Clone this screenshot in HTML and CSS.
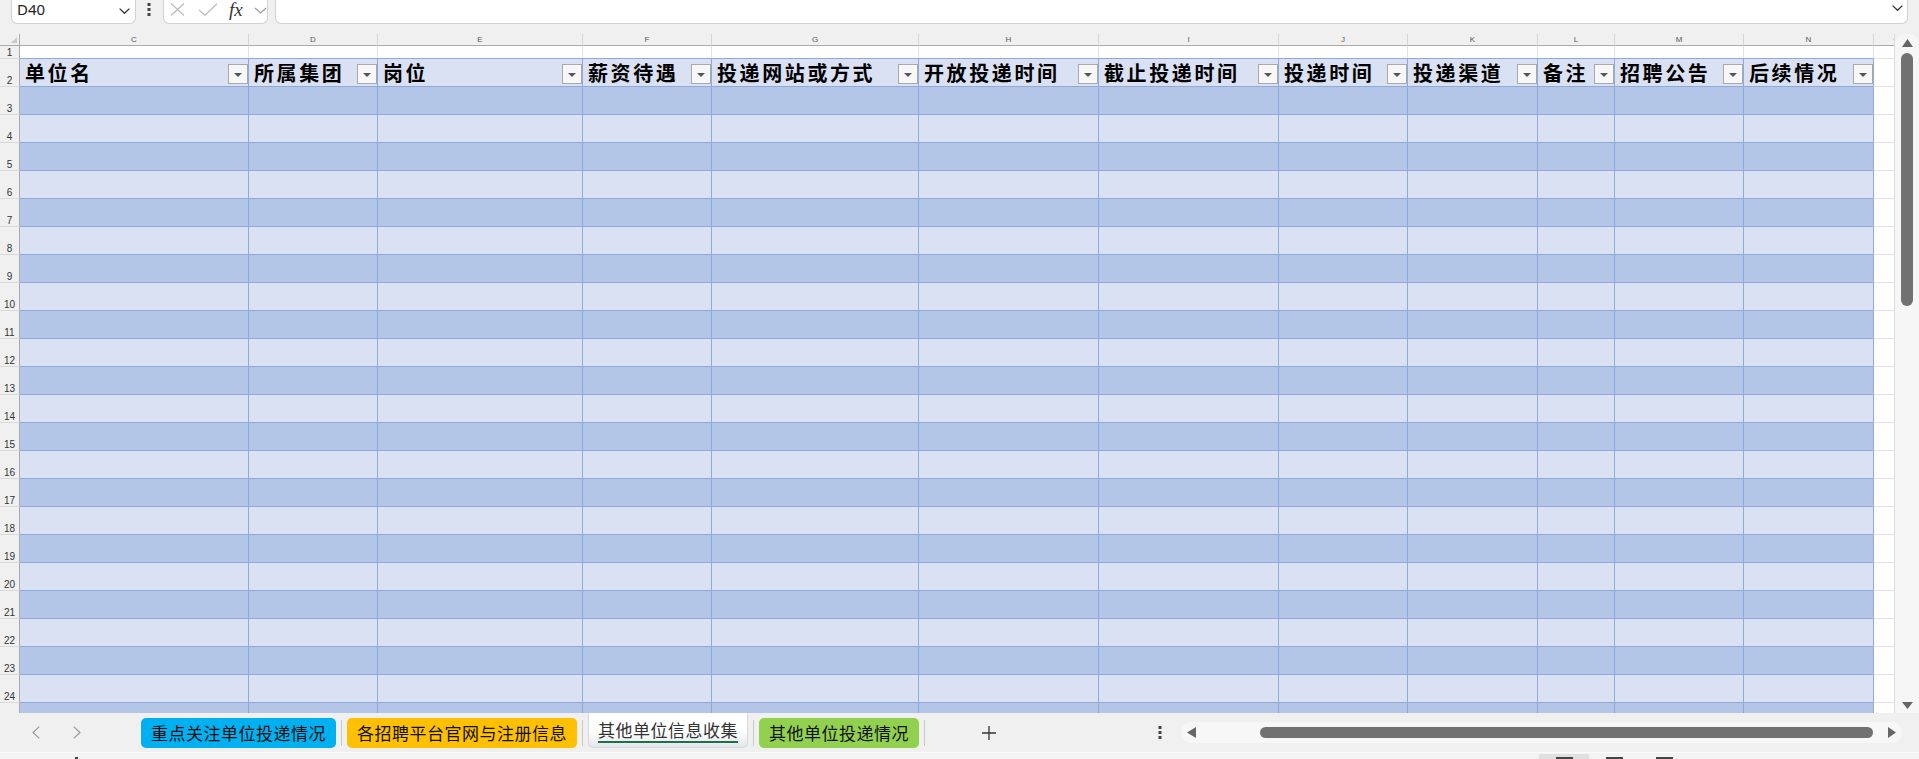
FILE: index.html
```html
<!DOCTYPE html>
<html lang="zh-CN">
<head>
<meta charset="utf-8">
<title>其他单位信息收集</title>
<link rel="stylesheet" href="styles.css">
</head>
<body>
<div class="app">
  <header class="toolbar">
    <div class="namebox">
      <span class="ref">D40</span>
      <svg class="nb-chev" width="11" height="6" viewBox="0 0 11 6"><polyline points="0.6,0.6 5.5,5.3 10.4,0.6" fill="none" stroke="#333" stroke-width="1.3"/></svg>
    </div>
    <svg class="vdots" width="4" height="13" viewBox="0 0 4 13"><rect x="0.5" y="0" width="3" height="3" fill="#444"/><rect x="0.5" y="5" width="3" height="3" fill="#444"/><rect x="0.5" y="10" width="3" height="3" fill="#444"/></svg>
    <div class="fbtns">
      <svg class="fb-x" width="15" height="13" viewBox="0 0 15 13"><path d="M1 0.5 L14 12.5 M14 0.5 L1 12.5" stroke="#bcbcbc" stroke-width="1.2" fill="none"/></svg>
      <svg class="fb-ok" width="20" height="13" viewBox="0 0 20 13"><polyline points="1,7 7,12.3 19,0.8" fill="none" stroke="#bcbcbc" stroke-width="1.2"/></svg>
      <span class="fx">fx</span>
      <svg class="fb-chev" width="13" height="7" viewBox="0 0 13 7"><polyline points="1,1 6.5,6 12,1" fill="none" stroke="#999" stroke-width="1.1"/></svg>
    </div>
    <div class="formula">
      <svg class="fm-chev" width="11" height="6" viewBox="0 0 11 6"><polyline points="0.6,0.6 5.5,5.3 10.4,0.6" fill="none" stroke="#333" stroke-width="1.3"/></svg>
    </div>
  </header>

  <main class="sheet">
    <div class="grid">
      <div class="row colhead">
        <div class="rh corner"><svg width="6" height="6" viewBox="0 0 6 6"><polygon points="6,0 6,6 0,6" fill="#c9c9c9"/></svg></div>
        <div>C</div><div>D</div><div>E</div><div>F</div><div>G</div><div>H</div><div>I</div><div>J</div><div>K</div><div>L</div><div>M</div><div>N</div><div>O</div>
      </div>
      <div class="row r1"><div class="rh">1</div><div></div><div></div><div></div><div></div><div></div><div></div><div></div><div></div><div></div><div></div><div></div><div></div><div class="o"></div></div>
      <div class="row lt hdr">
        <div class="rh">2</div>
        <div><span class="ht">单位名</span><span class="flt"></span></div>
        <div><span class="ht">所属集团</span><span class="flt"></span></div>
        <div><span class="ht">岗位</span><span class="flt"></span></div>
        <div><span class="ht">薪资待遇</span><span class="flt"></span></div>
        <div><span class="ht">投递网站或方式</span><span class="flt"></span></div>
        <div><span class="ht">开放投递时间</span><span class="flt"></span></div>
        <div><span class="ht">截止投递时间</span><span class="flt"></span></div>
        <div><span class="ht">投递时间</span><span class="flt"></span></div>
        <div><span class="ht">投递渠道</span><span class="flt"></span></div>
        <div><span class="ht">备注</span><span class="flt"></span></div>
        <div><span class="ht">招聘公告</span><span class="flt"></span></div>
        <div><span class="ht">后续情况</span><span class="flt"></span></div>
        <div class="o"></div>
      </div>
      <div class="row dk"><div class="rh">3</div><div></div><div></div><div></div><div></div><div></div><div></div><div></div><div></div><div></div><div></div><div></div><div></div><div class="o"></div></div>
      <div class="row lt"><div class="rh">4</div><div></div><div></div><div></div><div></div><div></div><div></div><div></div><div></div><div></div><div></div><div></div><div></div><div class="o"></div></div>
      <div class="row dk"><div class="rh">5</div><div></div><div></div><div></div><div></div><div></div><div></div><div></div><div></div><div></div><div></div><div></div><div></div><div class="o"></div></div>
      <div class="row lt"><div class="rh">6</div><div></div><div></div><div></div><div></div><div></div><div></div><div></div><div></div><div></div><div></div><div></div><div></div><div class="o"></div></div>
      <div class="row dk"><div class="rh">7</div><div></div><div></div><div></div><div></div><div></div><div></div><div></div><div></div><div></div><div></div><div></div><div></div><div class="o"></div></div>
      <div class="row lt"><div class="rh">8</div><div></div><div></div><div></div><div></div><div></div><div></div><div></div><div></div><div></div><div></div><div></div><div></div><div class="o"></div></div>
      <div class="row dk"><div class="rh">9</div><div></div><div></div><div></div><div></div><div></div><div></div><div></div><div></div><div></div><div></div><div></div><div></div><div class="o"></div></div>
      <div class="row lt"><div class="rh">10</div><div></div><div></div><div></div><div></div><div></div><div></div><div></div><div></div><div></div><div></div><div></div><div></div><div class="o"></div></div>
      <div class="row dk"><div class="rh">11</div><div></div><div></div><div></div><div></div><div></div><div></div><div></div><div></div><div></div><div></div><div></div><div></div><div class="o"></div></div>
      <div class="row lt"><div class="rh">12</div><div></div><div></div><div></div><div></div><div></div><div></div><div></div><div></div><div></div><div></div><div></div><div></div><div class="o"></div></div>
      <div class="row dk"><div class="rh">13</div><div></div><div></div><div></div><div></div><div></div><div></div><div></div><div></div><div></div><div></div><div></div><div></div><div class="o"></div></div>
      <div class="row lt"><div class="rh">14</div><div></div><div></div><div></div><div></div><div></div><div></div><div></div><div></div><div></div><div></div><div></div><div></div><div class="o"></div></div>
      <div class="row dk"><div class="rh">15</div><div></div><div></div><div></div><div></div><div></div><div></div><div></div><div></div><div></div><div></div><div></div><div></div><div class="o"></div></div>
      <div class="row lt"><div class="rh">16</div><div></div><div></div><div></div><div></div><div></div><div></div><div></div><div></div><div></div><div></div><div></div><div></div><div class="o"></div></div>
      <div class="row dk"><div class="rh">17</div><div></div><div></div><div></div><div></div><div></div><div></div><div></div><div></div><div></div><div></div><div></div><div></div><div class="o"></div></div>
      <div class="row lt"><div class="rh">18</div><div></div><div></div><div></div><div></div><div></div><div></div><div></div><div></div><div></div><div></div><div></div><div></div><div class="o"></div></div>
      <div class="row dk"><div class="rh">19</div><div></div><div></div><div></div><div></div><div></div><div></div><div></div><div></div><div></div><div></div><div></div><div></div><div class="o"></div></div>
      <div class="row lt"><div class="rh">20</div><div></div><div></div><div></div><div></div><div></div><div></div><div></div><div></div><div></div><div></div><div></div><div></div><div class="o"></div></div>
      <div class="row dk"><div class="rh">21</div><div></div><div></div><div></div><div></div><div></div><div></div><div></div><div></div><div></div><div></div><div></div><div></div><div class="o"></div></div>
      <div class="row lt"><div class="rh">22</div><div></div><div></div><div></div><div></div><div></div><div></div><div></div><div></div><div></div><div></div><div></div><div></div><div class="o"></div></div>
      <div class="row dk"><div class="rh">23</div><div></div><div></div><div></div><div></div><div></div><div></div><div></div><div></div><div></div><div></div><div></div><div></div><div class="o"></div></div>
      <div class="row lt"><div class="rh">24</div><div></div><div></div><div></div><div></div><div></div><div></div><div></div><div></div><div></div><div></div><div></div><div></div><div class="o"></div></div>
      <div class="row dk"><div class="rh"></div><div></div><div></div><div></div><div></div><div></div><div></div><div></div><div></div><div></div><div></div><div></div><div></div><div class="o"></div></div>
    </div>
    <div class="vscroll">
      <div class="vtrack">
        <svg class="v-up" width="11" height="8" viewBox="0 0 11 8"><polygon points="5.5,0 11,8 0,8" fill="#666"/></svg>
        <div class="vthumb"></div>
        <div class="vspace"></div>
        <svg class="v-down" width="11" height="7" viewBox="0 0 11 7"><polygon points="0,0 11,0 5.5,7" fill="#666"/></svg>
      </div>
    </div>
  </main>

  <footer class="tabbar">
    <div class="nav">
      <svg class="nav-prev" width="8" height="13" viewBox="0 0 8 13"><polyline points="7.3,0.6 1,6.5 7.3,12.4" fill="none" stroke="#999" stroke-width="1.2"/></svg>
      <svg class="nav-next" width="8" height="13" viewBox="0 0 8 13"><polyline points="0.7,0.6 7,6.5 0.7,12.4" fill="none" stroke="#999" stroke-width="1.2"/></svg>
    </div>
    <div class="tabs">
      <div class="tab tab-blue">重点关注单位投递情况</div>
      <span class="sep"></span>
      <div class="tab tab-yellow">各招聘平台官网与注册信息</div>
      <span class="sep"></span>
      <div class="tab tab-active"><span class="tab-label">其他单位信息收集</span></div>
      <span class="sep"></span>
      <div class="tab tab-green">其他单位投递情况</div>
      <span class="sep"></span>
    </div>
    <svg class="addsheet" width="14" height="14" viewBox="0 0 14 14"><path d="M7 0 V14 M0 7 H14" stroke="#333" stroke-width="1.3"/></svg>
    <svg class="hdots" width="4" height="13" viewBox="0 0 4 13"><rect x="0.5" y="0" width="3" height="3" fill="#444"/><rect x="0.5" y="5" width="3" height="3" fill="#444"/><rect x="0.5" y="10" width="3" height="3" fill="#444"/></svg>
    <div class="htrack">
      <svg class="h-left" width="9" height="11" viewBox="0 0 9 11"><polygon points="0,5.5 9,0 9,11" fill="#666"/></svg>
      <div class="hthumb"></div>
      <svg class="h-right" width="8" height="11" viewBox="0 0 8 11"><polygon points="0,0 8,5.5 0,11" fill="#666"/></svg>
    </div>
  </footer>

  <div class="status">
    <span class="st-mark"></span>
    <div class="views">
      <span class="view view-on"><i></i></span>
      <span class="view"><i></i></span>
      <span class="view"><i></i></span>
    </div>
  </div>
</div>
</body>
</html>
```

FILE: styles.css
```css
* { box-sizing: border-box; }

html, body {
  margin: 0;
  padding: 0;
}

body {
  width: 1919px;
  height: 759px;
  overflow: hidden;
  background: #f0f0f0;
  font-family: "Noto Sans", "Noto Sans CJK SC", sans-serif;
  color: #222;
}

.app {
  display: flex;
  flex-direction: column;
  height: 759px;
}

/* ---------- toolbar ---------- */
.toolbar {
  height: 34px;
  flex: none;
  display: flex;
  align-items: flex-start;
  padding-left: 11px;
  background: #f0f0f0;
}

.namebox {
  width: 125px;
  height: 24px;
  background: #fff;
  border: 1px solid #d2d2d2;
  border-top: none;
  border-radius: 0 0 6px 6px;
  display: flex;
  align-items: flex-start;
  padding-left: 5px;
}

.ref {
  font-family: "Noto Sans", sans-serif;
  font-size: 15px;
  line-height: 18px;
  color: #222;
}

.nb-chev {
  margin: 8px 5px 0 auto;
}

.vdots {
  margin: 3px 0 0 11px;
}

.fbtns {
  margin-left: 12px;
  width: 105px;
  height: 24px;
  background: #fff;
  border: 1px solid #d2d2d2;
  border-top: none;
  border-radius: 0 0 6px 6px;
  display: flex;
  align-items: flex-start;
}

.fb-x { margin: 3px 0 0 6px; }
.fb-ok { margin: 3px 0 0 13px; }

.fx {
  margin: 0 0 0 11px;
  font-family: "Liberation Serif", serif;
  font-style: italic;
  font-size: 19px;
  line-height: 19px;
  color: #333;
  width: 17px;
}

.fb-chev { margin: 7px 0 0 8px; }

.formula {
  margin-left: 7px;
  width: 1633px;
  height: 24px;
  background: #fff;
  border: 1px solid #d2d2d2;
  border-top: none;
  border-radius: 0 0 6px 6px;
  display: flex;
  justify-content: flex-end;
  align-items: flex-start;
}

.fm-chev { margin: 5px 4px 0 0; }

/* ---------- sheet ---------- */
.sheet {
  height: 679px;
  flex: none;
  display: flex;
}

.grid {
  width: 1894px;
  height: 679px;
  overflow: hidden;
  display: flex;
  flex-direction: column;
  background: #fff;
}

.row {
  flex: none;
  display: grid;
  grid-template-columns: 20px 228px 129px 205px 129px 207px 180px 180px 129px 130px 77px 129px 130px 46px;
  height: 28px;
}

.row > div {
  border-top: 1px solid #8ea9db;
  min-width: 0;
}

.row > div:nth-child(n+3) {
  border-left: 1px solid #8ea9db;
}

.row > .rh {
  background: #f0f0f0;
  border-top-color: #dadada;
  border-right: 1px solid #ababab;
  font-family: "Liberation Sans", "DejaVu Sans", sans-serif;
  font-size: 10px;
  line-height: 11px;
  color: #333;
  display: flex;
  align-items: flex-end;
  justify-content: center;
}

.row > .o {
  background: #fff;
  border-top-color: #e1e1e1;
}

.dk { background: #b4c6e7; }
.lt { background: #d9e1f2; }

/* column letters */
.colhead {
  height: 12px;
  background: #f0f0f0;
}

.colhead > div {
  border-top: none;
  border-bottom: 1px solid #ababab;
  font-family: "Liberation Sans", "DejaVu Sans", sans-serif;
  font-size: 8px;
  line-height: 10px;
  padding-top: 1px;
  color: #555;
  text-align: center;
}

.colhead > div:nth-child(n+3) {
  border-left-color: #d6d6d6;
}

.colhead > .corner {
  border-top: none;
  align-items: flex-end;
  justify-content: flex-end;
  padding: 0 2px 2px 0;
}

/* row 1 */
.r1 {
  height: 12px;
  background: #fff;
}

.r1 > div {
  border-top: none;
}

.r1 > div:nth-child(n+3) {
  border-left-color: #e1e1e1;
}

/* header row */
.hdr > div:nth-child(n+2):not(.o) {
  display: flex;
  align-items: flex-end;
  padding: 0 0 2px 5px;
}

.ht {
  font-family: "Noto Sans CJK SC", "Noto Sans", sans-serif;
  font-weight: 700;
  font-size: 20px;
  line-height: 20px;
  letter-spacing: 2.6px;
  color: #000;
  white-space: nowrap;
  margin-bottom: 1px;
}

.flt {
  margin-left: auto;
  flex: none;
  width: 20px;
  height: 20px;
  border: 1px solid #a9a9a9;
  background: #f7f7f7;
  display: flex;
  align-items: center;
  justify-content: center;
}

.flt::after {
  content: "";
  width: 0;
  height: 0;
  border-left: 4px solid transparent;
  border-right: 4px solid transparent;
  border-top: 4px solid #555;
  margin-top: 1px;
}

/* vertical scrollbar */
.vscroll {
  width: 25px;
  flex: none;
  background: #f0f0f0;
  border-left: 1px solid #dcdcdc;
  display: flex;
}

.vtrack {
  flex: 1;
  background: #f6f6f6;
  border-radius: 10px 10px 0 0;
  display: flex;
  flex-direction: column;
  align-items: center;
  padding: 5px 0 4px;
}

.vthumb {
  margin-top: 6px;
  width: 12px;
  height: 253px;
  border-radius: 6px;
  background: #717171;
}

.vspace { flex: 1; }

/* ---------- tab bar ---------- */
.tabbar {
  height: 39px;
  flex: none;
  display: flex;
  align-items: center;
  background: #f0f0f0;
}

.nav {
  width: 141px;
  flex: none;
  display: flex;
  align-items: center;
}

.nav-prev { margin-left: 32px; }
.nav-next { margin-left: 33px; }

.tabs {
  display: flex;
  align-items: center;
  align-self: stretch;
}

.tab {
  height: 30px;
  padding: 0 10px;
  border-radius: 5px;
  font-family: "Noto Sans CJK SC", sans-serif;
  font-size: 17px;
  letter-spacing: 0.5px;
  line-height: 29px;
  color: #111;
  white-space: nowrap;
}

.tab-blue { background: #00b0f0; }
.tab-yellow { background: #ffc000; }
.tab-green { background: #92d050; }

.tab-active {
  align-self: flex-start;
  height: 35px;
  background: linear-gradient(#ffffff 0%, #ffffff 55%, #e2e6ec 100%);
  border: 1px solid #d8d8d8;
  border-top: none;
  border-radius: 0 0 5px 5px;
  padding: 6px 9px 0;
  color: #333;
  line-height: 22px;
}

.tab-label {
  display: block;
  border-bottom: 2px solid #1e7145;
}

.sep {
  width: 1px;
  height: 26px;
  background: #c9c9c9;
  margin: 0 5px;
}

.addsheet { margin-left: 52px; flex: none; }
.hdots { margin-left: 162px; flex: none; }

.htrack {
  margin-left: 19px;
  width: 721px;
  height: 21px;
  border-radius: 11px;
  background: #f7f7f7;
  display: flex;
  align-items: center;
  padding-left: 6px;
}

.hthumb {
  margin-left: 64px;
  width: 613px;
  height: 11px;
  border-radius: 6px;
  background: #717171;
}

.h-right { margin-left: 15px; }

/* ---------- status strip ---------- */
.status {
  height: 7px;
  flex: none;
  background: #f3f3f3;
  border-top: 1px solid #fbfbfb;
  display: flex;
  align-items: flex-start;
  overflow: hidden;
}

.st-mark {
  margin: 4px 0 0 75px;
  width: 3px;
  height: 2px;
  background: #444;
}

.views {
  margin-left: 1461px;
  display: flex;
}

.view {
  width: 50px;
  height: 6px;
  margin-top: 1px;
  display: flex;
  justify-content: center;
  padding-top: 3px;
}

.view-on { background: #e0e0e0; }

.view i {
  display: block;
  width: 17px;
  height: 3px;
  background: #444;
}
```
